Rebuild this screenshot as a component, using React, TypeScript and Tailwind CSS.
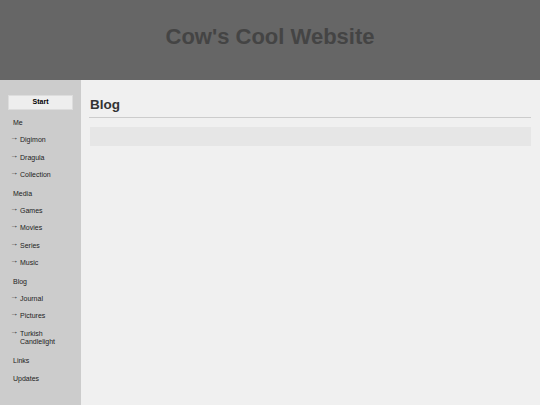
const menu: { label: string; sub?: boolean }[] = [
  { label: 'Me' },
  { label: 'Digimon', sub: true },
  { label: 'Dragula', sub: true },
  { label: 'Collection', sub: true },
  { label: 'Media' },
  { label: 'Games', sub: true },
  { label: 'Movies', sub: true },
  { label: 'Series', sub: true },
  { label: 'Music', sub: true },
  { label: 'Blog' },
  { label: 'Journal', sub: true },
  { label: 'Pictures', sub: true },
  { label: 'Turkish Candlelight', sub: true },
  { label: 'Links' },
  { label: 'Updates' },
];

const App = () => {
  return (
    <div className="min-h-[405px] flex flex-col bg-[#f0f0f0] font-['Liberation_Sans',Arial,sans-serif]">
      <header className="h-[80px] bg-[#666666] flex items-center justify-center">
        <h1 className="text-[22px] font-bold text-[#444444] pb-[8px]">Cow's Cool Website</h1>
      </header>

      <div className="flex flex-1">
        <nav className="w-[81px] shrink-0 bg-[#cccccc] pt-[15px] pb-[20px]">
          <div className="mx-[8px] h-[15px] bg-[#eeeeee] border border-[#dddddd] flex items-center justify-center text-[7px] font-bold text-black">
            Start
          </div>
          <ul className="mt-[8px] flex flex-col gap-[9px] text-[7px] leading-[9px] text-[#222222]">
            {menu.map((item) =>
              item.sub ? (
                <li key={item.label} className="flex pl-[10px]">
                  <span className="w-[10px] shrink-0 -mt-[3px] text-[8px]">→</span>
                  <span className="w-[40px] leading-[8.5px]">{item.label}</span>
                </li>
              ) : (
                <li key={item.label} className="pl-[13px]">
                  {item.label}
                </li>
              ),
            )}
          </ul>
        </nav>

        <main className="flex-1 pl-[8px] pr-[9px] pt-[15px]">
          <h2 className="text-[13.5px] leading-[20px] font-bold text-[#333333] pl-[1px] pb-[2px] border-b border-[#cccccc]">Blog</h2>
          <div className="mt-[9px] ml-[1px] h-[19px] bg-[#e6e6e6]"></div>
        </main>
      </div>
    </div>
  );
};

export default App;
